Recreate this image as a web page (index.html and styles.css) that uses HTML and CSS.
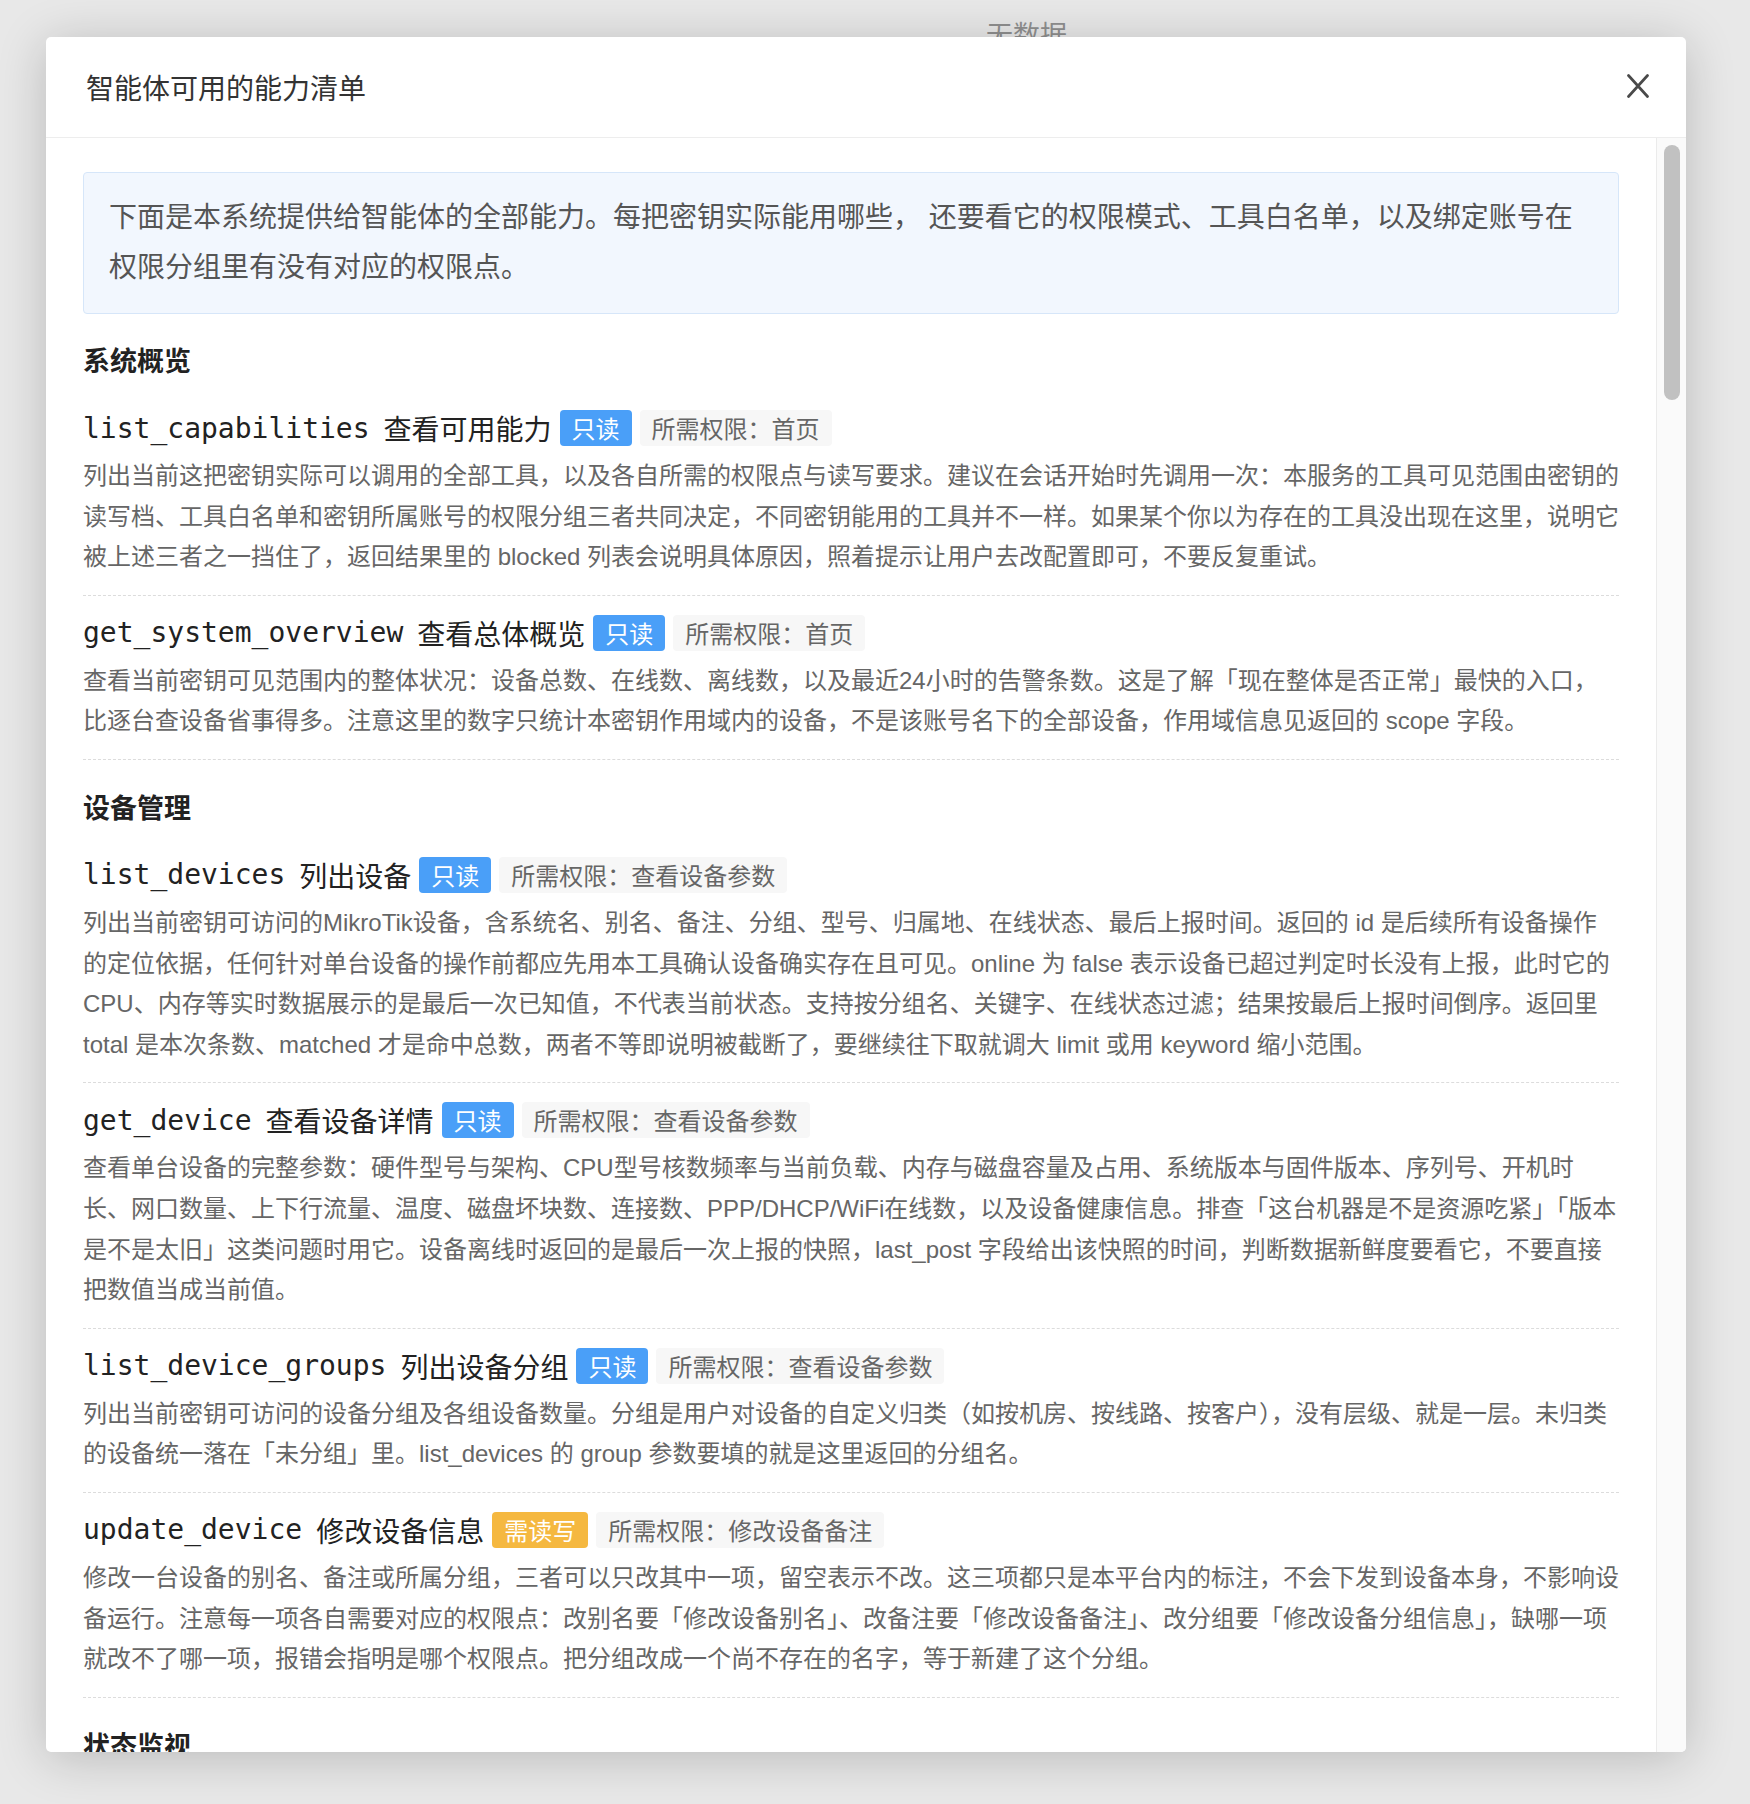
FILE: index.html
```html
<!DOCTYPE html>
<html lang="zh-CN">
<head>
<meta charset="utf-8">
<title>智能体可用的能力清单</title>
<link rel="stylesheet" href="styles.css">
</head>
<body>
<div class="page-behind">无数据</div>
<div class="overlay">
  <div class="modal">
    <div class="modal-header">
      <h2 class="modal-title">智能体可用的能力清单</h2>
      <button class="close" type="button" aria-label="关闭">
        <svg width="22" height="24" viewBox="0 0 22 24"><path d="M1.5 1.5 L20.5 22.5 M20.5 1.5 L1.5 22.5" stroke="#4a4a4a" stroke-width="2.7" stroke-linecap="round" fill="none"/></svg>
      </button>
    </div>
    <div class="modal-body">
      <div class="scroll-content">
        <div class="notice">下面是本系统提供给智能体的全部能力。每把密钥实际能用哪些， 还要看它的权限模式、工具白名单，以及绑定账号在权限分组里有没有对应的权限点。</div>

        <section class="group">
          <h3 class="group-title">系统概览</h3>
          <div class="tool">
            <div class="tool-head"><code class="tool-name">list_capabilities</code><span class="tool-label">查看可用能力</span><span class="badge badge-ro">只读</span><span class="perm">所需权限：首页</span></div>
            <p class="tool-desc">列出当前这把密钥实际可以调用的全部工具，以及各自所需的权限点与读写要求。建议在会话开始时先调用一次：本服务的工具可见范围由密钥的读写档、工具白名单和密钥所属账号的权限分组三者共同决定，不同密钥能用的工具并不一样。如果某个你以为存在的工具没出现在这里，说明它被上述三者之一挡住了，返回结果里的 blocked 列表会说明具体原因，照着提示让用户去改配置即可，不要反复重试。</p>
          </div>
          <div class="tool">
            <div class="tool-head"><code class="tool-name">get_system_overview</code><span class="tool-label">查看总体概览</span><span class="badge badge-ro">只读</span><span class="perm">所需权限：首页</span></div>
            <p class="tool-desc">查看当前密钥可见范围内的整体状况：设备总数、在线数、离线数，以及最近24小时的告警条数。这是了解「现在整体是否正常」最快的入口，比逐台查设备省事得多。注意这里的数字只统计本密钥作用域内的设备，不是该账号名下的全部设备，作用域信息见返回的 scope 字段。</p>
          </div>
        </section>

        <section class="group">
          <h3 class="group-title">设备管理</h3>
          <div class="tool">
            <div class="tool-head"><code class="tool-name">list_devices</code><span class="tool-label">列出设备</span><span class="badge badge-ro">只读</span><span class="perm">所需权限：查看设备参数</span></div>
            <p class="tool-desc">列出当前密钥可访问的MikroTik设备，含系统名、别名、备注、分组、型号、归属地、在线状态、最后上报时间。返回的 id 是后续所有设备操作的定位依据，任何针对单台设备的操作前都应先用本工具确认设备确实存在且可见。online 为 false 表示设备已超过判定时长没有上报，此时它的CPU、内存等实时数据展示的是最后一次已知值，不代表当前状态。支持按分组名、关键字、在线状态过滤；结果按最后上报时间倒序。返回里 total 是本次条数、matched 才是命中总数，两者不等即说明被截断了，要继续往下取就调大 limit 或用 keyword 缩小范围。</p>
          </div>
          <div class="tool">
            <div class="tool-head"><code class="tool-name">get_device</code><span class="tool-label">查看设备详情</span><span class="badge badge-ro">只读</span><span class="perm">所需权限：查看设备参数</span></div>
            <p class="tool-desc">查看单台设备的完整参数：硬件型号与架构、CPU型号核数频率与当前负载、内存与磁盘容量及占用、系统版本与固件版本、序列号、开机时长、网口数量、上下行流量、温度、磁盘坏块数、连接数、PPP/DHCP/WiFi在线数，以及设备健康信息。排查「这台机器是不是资源吃紧」「版本是不是太旧」这类问题时用它。设备离线时返回的是最后一次上报的快照，last_post 字段给出该快照的时间，判断数据新鲜度要看它，不要直接把数值当成当前值。</p>
          </div>
          <div class="tool">
            <div class="tool-head"><code class="tool-name">list_device_groups</code><span class="tool-label">列出设备分组</span><span class="badge badge-ro">只读</span><span class="perm">所需权限：查看设备参数</span></div>
            <p class="tool-desc">列出当前密钥可访问的设备分组及各组设备数量。分组是用户对设备的自定义归类（如按机房、按线路、按客户），没有层级、就是一层。未归类的设备统一落在「未分组」里。list_devices 的 group 参数要填的就是这里返回的分组名。</p>
          </div>
          <div class="tool">
            <div class="tool-head"><code class="tool-name">update_device</code><span class="tool-label">修改设备信息</span><span class="badge badge-rw">需读写</span><span class="perm">所需权限：修改设备备注</span></div>
            <p class="tool-desc">修改一台设备的别名、备注或所属分组，三者可以只改其中一项，留空表示不改。这三项都只是本平台内的标注，不会下发到设备本身，不影响设备运行。注意每一项各自需要对应的权限点：改别名要「修改设备别名」、改备注要「修改设备备注」、改分组要「修改设备分组信息」，缺哪一项就改不了哪一项，报错会指明是哪个权限点。把分组改成一个尚不存在的名字，等于新建了这个分组。</p>
          </div>
        </section>

        <section class="group">
          <h3 class="group-title">状态监视</h3>
        </section>
      </div>
      <div class="scrollbar"><div class="thumb"></div></div>
    </div>
  </div>
</div>
</body>
</html>
```

FILE: styles.css
```css
html, body {
  margin: 0;
  height: 100%;
}

body {
  position: relative;
  overflow: hidden;
  background: #e8e8e8;
  font-family: "Liberation Sans", "Noto Sans CJK SC", sans-serif;
}

.page-behind {
  position: absolute;
  left: 986px;
  top: 19px;
  font-family: "Noto Sans CJK SC", sans-serif;
  font-size: 27px;
  line-height: 30px;
  color: #8f8f8f;
}

.overlay {
  position: relative;
  z-index: 1;
  padding: 37px 0 0 46px;
}

.modal {
  width: 1640px;
  height: 1715px;
  background: #fff;
  border-radius: 5px;
  box-shadow: 0 6px 50px rgba(0, 0, 0, 0.2);
  display: flex;
  flex-direction: column;
  overflow: hidden;
}

.modal-header {
  flex: none;
  height: 100px;
  border-bottom: 1px solid #ededed;
  display: flex;
  align-items: center;
  justify-content: space-between;
  padding: 0 37px 0 40px;
}

.modal-title {
  margin: 0;
  font-family: "Noto Sans CJK SC", sans-serif;
  font-size: 28px;
  font-weight: 400;
  color: #333;
}

.close {
  display: block;
  width: 22px;
  height: 24px;
  margin-top: -2px;
  padding: 0;
  border: 0;
  background: none;
}

.close svg {
  display: block;
}

.modal-body {
  flex: 1;
  min-height: 0;
  display: flex;
}

.scroll-content {
  flex: 1;
  min-width: 0;
  overflow: hidden;
  padding: 34px 37px 0 37px;
}

.scrollbar {
  flex: none;
  width: 22px;
  border-left: 1px solid #ebebeb;
  background: #fafafa;
  padding: 7px 0 0 7px;
}

.thumb {
  width: 16px;
  height: 255px;
  border-radius: 8px;
  background: #c1c1c1;
}

.notice {
  background: #f2f7fe;
  border: 1px solid #d6e6f9;
  border-radius: 4px;
  padding: 20px 25px;
  font-size: 28px;
  line-height: 50px;
  color: #555;
}

.group-title {
  margin: 27px 0 11px;
  font-family: "Noto Sans CJK SC", sans-serif;
  font-size: 27px;
  line-height: 40px;
  font-weight: 700;
  color: #222;
}

.group:first-of-type .group-title {
  margin-top: 26px;
}

.tool {
  padding: 15px 0 17px;
  border-bottom: 1px dashed #dcdcdc;
}

.tool-head {
  display: flex;
  align-items: center;
  height: 44px;
  margin-bottom: 6px;
  white-space: nowrap;
}

.tool-name {
  font-family: "DejaVu Sans Mono", monospace;
  font-size: 28px;
  color: #222;
}

.tool-label {
  margin-left: 14px;
  font-family: "Noto Sans CJK SC", sans-serif;
  font-size: 28px;
  color: #222;
}

.badge {
  margin-left: 8px;
  padding: 0 12px;
  line-height: 36px;
  font-family: "Noto Sans CJK SC", sans-serif;
  font-size: 24px;
  color: #fff;
  border-radius: 4px;
}

.badge-ro {
  background: #4a9ff8;
}

.badge-rw {
  background: #f5b840;
}

.perm {
  margin-left: 8px;
  padding: 0 12px;
  line-height: 36px;
  font-family: "Noto Sans CJK SC", sans-serif;
  font-size: 24px;
  color: #666;
  background: #f7f7f7;
  border-radius: 4px;
}

.tool-desc {
  margin: 0;
  font-size: 24px;
  line-height: 40.6px;
  color: #666;
}
```
